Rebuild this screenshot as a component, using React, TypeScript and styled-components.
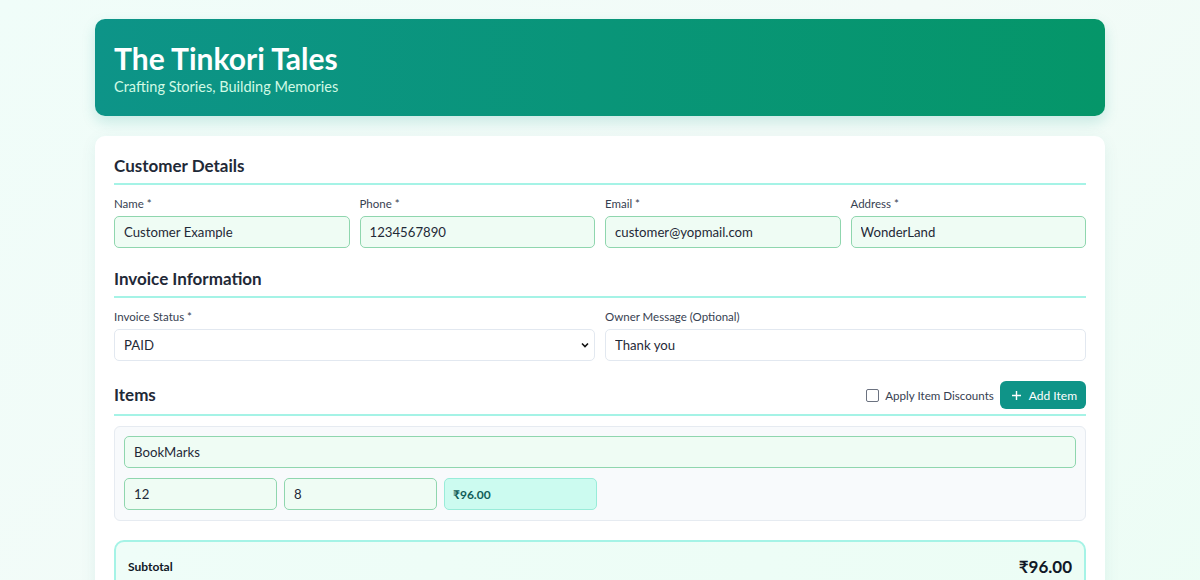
import React from "react";
import styled, { createGlobalStyle } from "styled-components";

const Global = createGlobalStyle`
  html, body { margin: 0; padding: 0; }
  body {
    font-family: Lato, "Noto Sans", "DejaVu Sans", sans-serif;
    background: linear-gradient(135deg, #f0fdf9 0%, #f3fbf8 50%, #ecfdf5 100%);
    min-height: 580px;
    color: #1f2937;
  }
  * { box-sizing: border-box; }
`;

const Page = styled.div`
  width: 1010px;
  margin: 0 auto;
  padding-top: 19px;
  display: flex;
  flex-direction: column;
  gap: 20px;
`;

const Header = styled.header`
  height: 97px;
  border-radius: 10px;
  background: linear-gradient(90deg, #0d9488 0%, #059669 100%);
  box-shadow: 0 6px 14px rgba(13, 148, 136, 0.18);
  padding: 21px 19px 0;
  color: #fff;
`;

const Title = styled.h1`
  margin: 0;
  font-size: 30px;
  font-weight: 700;
  line-height: 36px;
`;

const Subtitle = styled.p`
  margin: 1px 0 0;
  font-size: 14.5px;
  line-height: 20px;
  color: #d1fae5;
`;

const Card = styled.main`
  background: #fff;
  border-radius: 10px;
  box-shadow: 0 4px 16px rgba(15, 118, 110, 0.08);
  padding: 19px 19px 40px;
  display: flex;
  flex-direction: column;
`;

const SectionHead = styled.div<{ $pb?: number }>`
  display: flex;
  align-items: center;
  justify-content: space-between;
  border-bottom: 2px solid #a5f3e6;
  padding-bottom: ${(p) => p.$pb ?? 6}px;
`;

const SectionTitle = styled.h2`
  margin: 0;
  font-size: 17px;
  font-weight: 700;
  line-height: 22px;
  color: #1f2937;
`;

const Section = styled.section<{ $gap?: number; $inner?: number }>`
  display: flex;
  flex-direction: column;
  gap: ${(p) => p.$inner ?? 11}px;
  margin-bottom: ${(p) => p.$gap ?? 20}px;
`;

const Grid = styled.div<{ $cols: number }>`
  display: grid;
  grid-template-columns: repeat(${(p) => p.$cols}, 1fr);
  gap: 10px;
`;

const Field = styled.label`
  display: flex;
  flex-direction: column;
  gap: 5px;
`;

const Label = styled.span`
  font-size: 11.5px;
  line-height: 15px;
  color: #374151;
`;

const Input = styled.input<{ $tone?: "green" | "white" }>`
  height: 32px;
  border-radius: 5px;
  border: 1px solid ${(p) => (p.$tone === "white" ? "#e2e8f0" : "#8fd6ae")};
  background: ${(p) => (p.$tone === "white" ? "#fff" : "#effcf4")};
  padding: 0 9px;
  font-family: inherit;
  font-size: 13.2px;
  color: #1f2937;
  outline: none;
`;

const SelectWrap = styled.div`
  position: relative;
`;

const Select = styled.select`
  width: 100%;
  height: 32px;
  border-radius: 5px;
  border: 1px solid #e2e8f0;
  background: #fff;
  padding: 0 9px;
  font-family: inherit;
  font-size: 13.2px;
  color: #1f2937;
  appearance: none;
  outline: none;
`;

const Chevron = styled.svg`
  position: absolute;
  right: 5px;
  top: 12px;
  pointer-events: none;
`;

const Actions = styled.div`
  display: flex;
  align-items: center;
  gap: 6px;
`;

const CheckLabel = styled.label`
  display: flex;
  align-items: center;
  gap: 6px;
  font-size: 11.6px;
  color: #374151;
`;

const Box = styled.span`
  width: 13px;
  height: 13px;
  border: 1px solid #6b7280;
  border-radius: 2px;
  background: #fff;
`;

const AddButton = styled.button`
  height: 28px;
  padding: 0 9px 0 11px;
  display: flex;
  align-items: center;
  gap: 7px;
  border: none;
  border-radius: 6px;
  background: #0f9488;
  color: #fff;
  font-family: inherit;
  font-size: 12px;
  cursor: pointer;
`;

const ItemCard = styled.div`
  background: #f8fafc;
  border: 1px solid #e6ebf1;
  border-radius: 6px;
  padding: 9px 9px 10px;
  display: flex;
  flex-direction: column;
  gap: 10px;
`;

const ItemRow = styled.div`
  display: grid;
  grid-template-columns: 153px 153px 153px;
  gap: 7px;
`;

const Amount = styled.div`
  height: 32px;
  border-radius: 5px;
  border: 1px solid #99ecd9;
  background: #ccfbf0;
  padding: 0 8px;
  display: flex;
  align-items: center;
  font-size: 12px;
  font-weight: 700;
  color: #115e59;
`;

const Summary = styled.div`
  border: 2px solid #a5f3e6;
  border-radius: 10px;
  background: linear-gradient(90deg, #effdf8, #ecfdf5);
  padding: 14px 12px 30px;
  display: flex;
  justify-content: space-between;
  align-items: flex-start;
`;

const SummaryLabel = styled.span`
  font-size: 12px;
  font-weight: 700;
  color: #111827;
  margin-top: 3px;
`;

const SummaryValue = styled.span`
  font-size: 17px;
  font-weight: 700;
  color: #111827;
`;

export default function App() {
  return (
    <>
      <Global />
      <Page>
        <Header>
          <Title>The Tinkori Tales</Title>
          <Subtitle>Crafting Stories, Building Memories</Subtitle>
        </Header>
        <Card>
          <Section>
            <SectionHead>
              <SectionTitle>Customer Details</SectionTitle>
            </SectionHead>
            <Grid $cols={4}>
              <Field>
                <Label>Name *</Label>
                <Input defaultValue="Customer Example" />
              </Field>
              <Field>
                <Label>Phone *</Label>
                <Input defaultValue="1234567890" />
              </Field>
              <Field>
                <Label>Email *</Label>
                <Input defaultValue="customer@yopmail.com" />
              </Field>
              <Field>
                <Label>Address *</Label>
                <Input defaultValue="WonderLand" />
              </Field>
            </Grid>
          </Section>
          <Section>
            <SectionHead>
              <SectionTitle>Invoice Information</SectionTitle>
            </SectionHead>
            <Grid $cols={2}>
              <Field>
                <Label>Invoice Status *</Label>
                <SelectWrap>
                  <Select defaultValue="PAID">
                    <option>PAID</option>
                    <option>UNPAID</option>
                  </Select>
                  <Chevron width="10" height="8" viewBox="0 0 10 8">
                    <path d="M2 2.5 L5 5.5 L8 2.5" fill="none" stroke="#111" strokeWidth="1.6" />
                  </Chevron>
                </SelectWrap>
              </Field>
              <Field>
                <Label>Owner Message (Optional)</Label>
                <Input $tone="white" defaultValue="Thank you" />
              </Field>
            </Grid>
          </Section>
          <Section $gap={19} $inner={10}>
            <SectionHead $pb={5}>
              <SectionTitle>Items</SectionTitle>
              <Actions>
                <CheckLabel>
                  <Box />
                  Apply Item Discounts
                </CheckLabel>
                <AddButton>
                  <svg width="11" height="11" viewBox="0 0 11 11">
                    <path d="M5.5 1v9M1 5.5h9" stroke="#fff" strokeWidth="1.4" />
                  </svg>
                  Add Item
                </AddButton>
              </Actions>
            </SectionHead>
            <ItemCard>
              <Input defaultValue="BookMarks" />
              <ItemRow>
                <Input defaultValue="12" />
                <Input defaultValue="8" />
                <Amount>₹96.00</Amount>
              </ItemRow>
            </ItemCard>
          </Section>
          <Summary>
            <SummaryLabel>Subtotal</SummaryLabel>
            <SummaryValue>₹96.00</SummaryValue>
          </Summary>
        </Card>
      </Page>
    </>
  );
}
